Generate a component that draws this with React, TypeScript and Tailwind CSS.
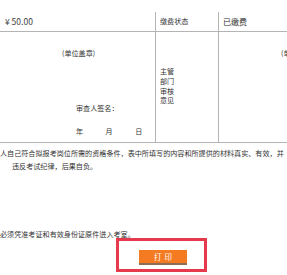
import React from 'react';

const FONT = { fontFamily: '"Noto Sans CJK SC", "Noto Sans", sans-serif' };

export default function App() {
  return (
    <div
      className="w-[287px] h-[275px] overflow-hidden bg-white text-[#333] text-[7.1px]"
      style={FONT}
    >
      <div className="h-[12px]" />

      {/* fee row */}
      <div className="flex h-[20px] border-b border-[#b4b4b4]">
        <div className="w-[156px] border-r border-[#b4b4b4] pl-[5px] flex items-center text-[8.5px] text-[#444]">
          ¥ 50.00
        </div>
        <div className="w-[63px] border-r border-[#b4b4b4] pl-[4px] flex items-center">缴费状态</div>
        <div className="flex-1 pl-[4px] flex items-center text-[8px]">已缴费</div>
      </div>

      {/* seal row */}
      <div className="flex h-[111px] border-b border-[#b4b4b4] leading-[10px]">
        <div className="w-[156px] border-r border-[#b4b4b4] flex flex-col">
          <div className="mt-[16px] ml-[62px] whitespace-nowrap">(单位盖章)</div>
          <div className="mt-[45px] ml-[76px] whitespace-nowrap">审查人签名：</div>
          <div className="mt-[13px] ml-[76px] flex gap-[22.5px]">
            <span>年</span>
            <span>月</span>
            <span>日</span>
          </div>
        </div>
        <div className="w-[63px] border-r border-[#b4b4b4] pl-[4px] pt-[35px] leading-[9.8px]">
          <div>主管</div>
          <div>部门</div>
          <div>审核</div>
          <div>意见</div>
        </div>
        <div className="flex-1 overflow-hidden pl-[62px] pt-[16px] whitespace-nowrap">(单位盖章)</div>
      </div>

      {/* notes */}
      <div className="mt-[5px] leading-[10px] whitespace-nowrap">
        人自己符合拟报考岗位所需的资格条件，表中所填写的内容和所提供的材料真实、有效，并
      </div>
      <div className="mt-[3px] ml-[12px] leading-[10px] whitespace-nowrap">违反考试纪律，后果自负。</div>
      <div className="mt-[58px] leading-[10px] whitespace-nowrap">必须凭准考证和有效身份证原件进入考室。</div>

      {/* print button, highlighted */}
      <div className="mt-[-1px] ml-[116px] w-[91px] h-[34px] border-[3px] border-[#e53a4b] pl-[20px] pt-[9px]">
        <button className="w-[48px] h-[15px] bg-[#f57b22] border-b-2 border-[#8d6d56] text-white text-[7.5px] tracking-[3px] flex items-center justify-center pl-[3px]">
          打印
        </button>
      </div>
    </div>
  );
}
